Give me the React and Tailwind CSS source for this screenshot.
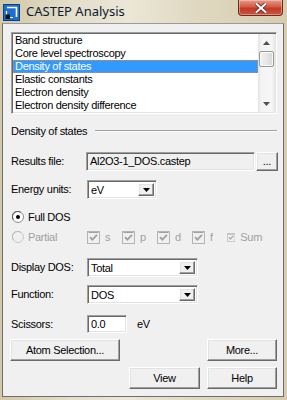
import React from 'react';

const sunken =
  'border border-t-[#a0a0a0] border-l-[#a0a0a0] border-b-white border-r-white shadow-[inset_1px_1px_0_#696969,inset_-1px_-1px_0_#e3e3e3]';
const raised =
  'border border-t-white border-l-white border-b-[#696969] border-r-[#696969] shadow-[inset_-1px_-1px_0_#a0a0a0,inset_1px_1px_0_#e3e3e3] bg-[#f0f0f0]';

const items = [
  'Band structure',
  'Core level spectroscopy',
  'Density of states',
  'Elastic constants',
  'Electron density',
  'Electron density difference',
];

const AppIcon = () => (
  <svg width="17" height="17" viewBox="0 0 17 17">
    <rect x="0.5" y="0.5" width="16" height="16" fill="#1d6fcf" stroke="#0b3f8c" />
    <path d="M4 3.5H13.5V13" fill="none" stroke="#fff" strokeWidth="1.6" />
    <path d="M3.5 7V13.5H10" fill="none" stroke="#fff" strokeWidth="1.2" />
    <rect x="2.5" y="10.5" width="4.5" height="4.5" fill="#111" />
  </svg>
);

const DropBtn = () => (
  <div className={`${raised} w-[16px] h-full flex items-center justify-center`}>
    <svg width="7" height="4" viewBox="0 0 7 4">
      <path d="M0 0H7L3.5 4Z" fill="#000" />
    </svg>
  </div>
);

const Combo = ({ w, value }) => (
  <div className={`${sunken} ${w} h-full bg-white flex p-[2px]`}>
    <div className="flex-1 pl-[1px] leading-[15px]">{value}</div>
    <DropBtn />
  </div>
);

const Radio = ({ checked, disabled }) => (
  <svg width="12" height="12" viewBox="0 0 12 12">
    <circle cx="6" cy="6" r="5.5" fill={disabled ? '#f0f0f0' : '#fff'} stroke={disabled ? '#c8c8c8' : '#8a8a8a'} />
    <path d="M1.2 8.6A5.3 5.3 0 0 1 8.6 1.2" fill="none" stroke={disabled ? '#b8b8b8' : '#555'} />
    {checked && <circle cx="6" cy="6" r="2" fill="#000" />}
  </svg>
);

const Check = () => (
  <svg width="13" height="13" viewBox="0 0 13 13">
    <rect x="0.5" y="0.5" width="12" height="12" fill="#f0f0f0" stroke="#b4b4b4" />
    <path d="M1.5 1.5H11.5" stroke="#a0a0a0" />
    <path d="M3 6.2L5.3 8.6L10 3.8" fill="none" stroke="#a0a0a0" strokeWidth="1.8" />
  </svg>
);

const Button = ({ w, children }) => (
  <div className={`${raised} ${w} h-[22px] flex items-center justify-center`}>{children}</div>
);

export default function App() {
  return (
    <div className="w-[287px] h-[400px] overflow-hidden flex flex-col bg-[linear-gradient(90deg,#d2c8a6_0%,#e4decb_25%,#ebe6d6_45%,#dfd7bf_70%,#d6cdb0_100%)] font-['Liberation_Sans',Arial,sans-serif] text-[11px] tracking-[-0.3px] text-black">
      <div className="relative h-[23px] flex items-center shrink-0">
        <div className="ml-[3px] mt-[1px]">
          <AppIcon />
        </div>
        <div className="ml-[6px] font-['Noto_Sans',sans-serif] text-[13px] tracking-[0px] text-[#0b1a33] leading-none">
          CASTEP Analysis
        </div>
        <div className="absolute top-0 left-[238px] w-[45px] h-[16px] rounded-b-[4px] border border-t-0 border-[#6e2a22] bg-[linear-gradient(180deg,#e59b8c_0%,#d35a45_45%,#c23a26_55%,#c9553c_100%)] flex items-center justify-center shadow-[inset_0_0_0_1px_rgba(255,220,210,0.45)]">
          <svg width="12" height="10" viewBox="0 0 12 10">
            <path d="M1.5 1L10.5 9M10.5 1L1.5 9" stroke="#5a2a24" strokeWidth="3.6" strokeLinecap="square" />
            <path d="M1.5 1L10.5 9M10.5 1L1.5 9" stroke="#fff" strokeWidth="2" strokeLinecap="square" />
          </svg>
        </div>
      </div>

      <div className="ml-[2px] w-[282px] h-[374px] shrink-0 border border-[#6e6e6e] border-t-[#9a9a9a] bg-[#f0f0f0] pl-[8px] pt-[8px] flex flex-col items-start">
        <div className={`${sunken} w-[266px] h-[82px] bg-white flex p-[1px]`}>
          <div className="w-[245px] flex flex-col">
            {items.map((t, i) =>
              i === 2 ? (
                <div key={t} className="h-[13px] leading-[13px] pl-[2px] bg-[#3399ff] text-white outline-1 outline-dotted outline-[#d88a3c] -outline-offset-1">
                  {t}
                </div>
              ) : (
                <div key={t} className="h-[13px] leading-[13px] pl-[2px]">
                  {t}
                </div>
              )
            )}
          </div>
          <div className="w-[17px] h-full bg-[linear-gradient(90deg,#e4e4e4_0%,#f4f4f4_20%,#f6f6f6_80%,#e8e8e8_100%)] flex flex-col items-center">
            <div className="h-[17px] flex items-center justify-center">
              <svg width="7" height="4" viewBox="0 0 7 4">
                <path d="M0 4H7L3.5 0Z" fill="#505050" />
              </svg>
            </div>
            <div className="w-[15px] h-[16px] rounded-[2px] border border-[#979797] bg-[linear-gradient(90deg,#f2f2f2,#e6e6e6_50%,#d8d8d8)] shadow-[inset_0_0_0_1px_#fafafa]" />
            <div className="flex-1" />
            <div className="h-[17px] flex items-center justify-center">
              <svg width="7" height="4" viewBox="0 0 7 4">
                <path d="M0 0H7L3.5 4Z" fill="#505050" />
              </svg>
            </div>
          </div>
        </div>

        <div className="mt-[10px] w-[266px] h-[14px] flex items-center">
          <span className="leading-[14px]">Density of states</span>
          <div className="ml-auto w-[182px] h-[2px] border-t border-t-[#a0a0a0] border-b border-b-white" />
        </div>

        <div className="mt-[14px] h-[19px] flex items-center">
          <span className="w-[75px]">Results file:</span>
          <div className={`${sunken} w-[169px] h-full bg-[#f0f0f0] pl-[3px] leading-[17px]`}>Al2O3-1_DOS.castep</div>
          <div className={`${raised} ml-px w-[22px] h-[19px] flex items-center justify-center pb-[1px]`}>...</div>
        </div>

        <div className="mt-[9px] h-[19px] flex items-center">
          <span className="w-[76px]">Energy units:</span>
          <Combo w="w-[70px]" value="eV" />
        </div>

        <div className="mt-[11px] h-[14px] flex items-center">
          <div className="ml-px">
            <Radio checked />
          </div>
          <span className="ml-[4px]">Full DOS</span>
        </div>

        <div className="mt-[6px] h-[14px] flex items-center">
          <div className="w-[76px] flex items-center">
            <div className="ml-px">
              <Radio disabled />
            </div>
            <span className="ml-[4px] text-[#a0a0a0]">Partial</span>
          </div>
          {['s', 'p', 'd', 'f', 'Sum'].map((l) => (
            <div key={l} className="w-[35px] flex items-center">
              <Check />
              <span className="ml-[5px] text-[#a0a0a0]">{l}</span>
            </div>
          ))}
        </div>

        <div className="mt-[14px] h-[19px] flex items-center">
          <span className="w-[76px]">Display DOS:</span>
          <Combo w="w-[111px]" value="Total" />
        </div>

        <div className="mt-[8px] h-[19px] flex items-center">
          <span className="w-[76px]">Function:</span>
          <Combo w="w-[111px]" value="DOS" />
        </div>

        <div className="mt-[11px] h-[18px] flex items-center">
          <span className="w-[76px]">Scissors:</span>
          <div className={`${sunken} w-[40px] h-full bg-white pl-[3px] leading-[14px] pt-[1px]`}>0.0</div>
          <span className="ml-[10px]">eV</span>
        </div>

        <div className="mt-[6px] -ml-px w-[267px] flex justify-between">
          <Button w="w-[110px]">Atom Selection...</Button>
          <Button w="w-[70px]">More...</Button>
        </div>

        <div className="mt-[6px] -ml-px w-[267px] flex justify-end gap-[7px]">
          <Button w="w-[71px]">View</Button>
          <Button w="w-[70px]">Help</Button>
        </div>
      </div>
    </div>
  );
}
